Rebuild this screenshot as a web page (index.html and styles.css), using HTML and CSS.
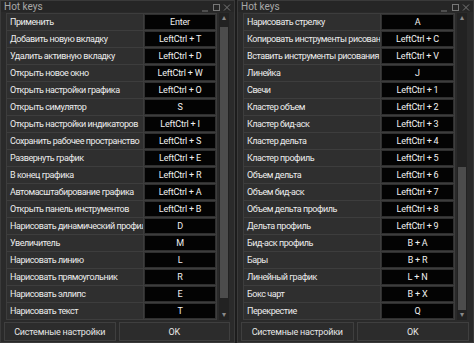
FILE: index.html
```html
<!DOCTYPE html>
<html lang="ru">
<head>
    <meta charset="UTF-8">
    <title>Hot keys</title>
    <link rel="stylesheet" href="styles.css">
</head>
<body>
<div class="desk">
    <div class="window">
        <div class="titlebar">
            <span class="titlebar__text">Hot keys</span>
            <span class="titlebar__btns">
                <svg width="30" height="9" viewBox="0 0 30 9">
                    <path d="M1 8H7" stroke="#777" stroke-width="1"/>
                    <rect x="12.5" y="1.5" width="6" height="6" fill="none" stroke="#777"/>
                    <path d="M23 1.5L29 7.5M29 1.5L23 7.5" stroke="#777" stroke-width="1"/>
                </svg>
            </span>
        </div>
        <div class="body">
            <div class="list">
                <div class="row"><span class="row__name">Применить</span><span class="row__key">Enter</span></div>
                <div class="row"><span class="row__name">Добавить новую вкладку</span><span class="row__key">LeftCtrl + T</span></div>
                <div class="row"><span class="row__name">Удалить активную вкладку</span><span class="row__key">LeftCtrl + D</span></div>
                <div class="row"><span class="row__name">Открыть новое окно</span><span class="row__key">LeftCtrl + W</span></div>
                <div class="row"><span class="row__name">Открыть настройки графика</span><span class="row__key">LeftCtrl + O</span></div>
                <div class="row"><span class="row__name">Открыть симулятор</span><span class="row__key">S</span></div>
                <div class="row"><span class="row__name">Открыть настройки индикаторов</span><span class="row__key">LeftCtrl + I</span></div>
                <div class="row"><span class="row__name">Сохранить рабочее пространство</span><span class="row__key">LeftCtrl + S</span></div>
                <div class="row"><span class="row__name">Развернуть график</span><span class="row__key">LeftCtrl + E</span></div>
                <div class="row"><span class="row__name">В конец графика</span><span class="row__key">LeftCtrl + R</span></div>
                <div class="row"><span class="row__name">Автомасштабирование графика</span><span class="row__key">LeftCtrl + A</span></div>
                <div class="row"><span class="row__name">Открыть панель инструментов</span><span class="row__key">LeftCtrl + B</span></div>
                <div class="row"><span class="row__name">Нарисовать динамический профил</span><span class="row__key">D</span></div>
                <div class="row"><span class="row__name">Увеличитель</span><span class="row__key">M</span></div>
                <div class="row"><span class="row__name">Нарисовать линию</span><span class="row__key">L</span></div>
                <div class="row"><span class="row__name">Нарисовать прямоугольник</span><span class="row__key">R</span></div>
                <div class="row"><span class="row__name">Нарисовать эллипс</span><span class="row__key">E</span></div>
                <div class="row"><span class="row__name">Нарисовать текст</span><span class="row__key">T</span></div>
            </div>
            <div class="scroll">
                <span class="scroll__arrow">&#9652;</span>
                <div class="scroll__track scroll__track--left"><div class="scroll__thumb"></div></div>
                <span class="scroll__arrow">&#9662;</span>
            </div>
        </div>
        <div class="footer">
            <button class="btn">Системные настройки</button>
            <button class="btn">OK</button>
        </div>
    </div>

    <div class="window window--right">
        <div class="titlebar">
            <span class="titlebar__text">Hot keys</span>
            <span class="titlebar__btns">
                <svg width="30" height="9" viewBox="0 0 30 9">
                    <path d="M1 8H7" stroke="#777" stroke-width="1"/>
                    <rect x="12.5" y="1.5" width="6" height="6" fill="none" stroke="#777"/>
                    <path d="M23 1.5L29 7.5M29 1.5L23 7.5" stroke="#777" stroke-width="1"/>
                </svg>
            </span>
        </div>
        <div class="body">
            <div class="list">
                <div class="row"><span class="row__name">Нарисовать стрелку</span><span class="row__key">A</span></div>
                <div class="row"><span class="row__name">Копировать инструменты рисовани</span><span class="row__key">LeftCtrl + C</span></div>
                <div class="row"><span class="row__name">Вставить инструменты рисования</span><span class="row__key">LeftCtrl + V</span></div>
                <div class="row"><span class="row__name">Линейка</span><span class="row__key">J</span></div>
                <div class="row"><span class="row__name">Свечи</span><span class="row__key">LeftCtrl + 1</span></div>
                <div class="row"><span class="row__name">Кластер объем</span><span class="row__key">LeftCtrl + 2</span></div>
                <div class="row"><span class="row__name">Кластер бид-аск</span><span class="row__key">LeftCtrl + 3</span></div>
                <div class="row"><span class="row__name">Кластер дельта</span><span class="row__key">LeftCtrl + 4</span></div>
                <div class="row"><span class="row__name">Кластер профиль</span><span class="row__key">LeftCtrl + 5</span></div>
                <div class="row"><span class="row__name">Объем дельта</span><span class="row__key">LeftCtrl + 6</span></div>
                <div class="row"><span class="row__name">Объем бид-аск</span><span class="row__key">LeftCtrl + 7</span></div>
                <div class="row"><span class="row__name">Объем дельта профиль</span><span class="row__key">LeftCtrl + 8</span></div>
                <div class="row"><span class="row__name">Дельта профиль</span><span class="row__key">LeftCtrl + 9</span></div>
                <div class="row"><span class="row__name">Бид-аск профиль</span><span class="row__key">B + A</span></div>
                <div class="row"><span class="row__name">Бары</span><span class="row__key">B + R</span></div>
                <div class="row"><span class="row__name">Линейный график</span><span class="row__key">L + N</span></div>
                <div class="row"><span class="row__name">Бокс чарт</span><span class="row__key">B + X</span></div>
                <div class="row"><span class="row__name">Перекрестие</span><span class="row__key">Q</span></div>
            </div>
            <div class="scroll">
                <span class="scroll__arrow">&#9652;</span>
                <div class="scroll__track scroll__track--right"><div class="scroll__thumb"></div></div>
                <span class="scroll__arrow">&#9662;</span>
            </div>
        </div>
        <div class="footer">
            <button class="btn">Системные настройки</button>
            <button class="btn">OK</button>
        </div>
    </div>
</div>
</body>
</html>
```

FILE: styles.css
```css
body {
  margin: 0;
  padding: 0;
  background-color: #1c1c1c;
  font-family: Roboto, "Noto Sans", sans-serif;
  font-size: 9px;
  letter-spacing: -0.45px;
  color: #ececec;
}

.desk {
  display: flex;
  gap: 2px;
  width: 474px;
  height: 343px;
  overflow: hidden;
}

.window {
  display: flex;
  flex-direction: column;
  width: 235px;
  height: 343px;
  background-color: #2a2a2a;
  box-sizing: border-box;
  border: 1px solid #3a3a3a;
}

.window--right {
  width: 237px;
}

.titlebar {
  display: flex;
  justify-content: space-between;
  align-items: center;
  height: 11px;
  padding: 0 3px 0 3px;
  background-color: #262626;
  color: #a8a8a8;
  font-size: 10px;
  letter-spacing: 0;
}

.titlebar__btns {
  display: flex;
  margin-top: 1px;
}

.body {
  display: flex;
  gap: 2px;
  padding: 1px 5px 0 5px;
}

.list {
  width: 210px;
  border: 1px solid #3d3d3d;
  border-bottom: none;
}

.row {
  display: flex;
  height: 17px;
  box-sizing: border-box;
  border-bottom: 1px solid #3d3d3d;
  background-color: #2f2f2f;
}

.row__name {
  flex: none;
  box-sizing: border-box;
  width: 137px;
  padding-left: 3px;
  line-height: 16px;
  white-space: nowrap;
  overflow: hidden;
  border-right: 1px solid #3d3d3d;
}

.row__key {
  flex: 1;
  margin: 1px;
  background-color: #030303;
  text-align: center;
  line-height: 14px;
  color: #f0f0f0;
  letter-spacing: -0.2px;
}

.scroll {
  display: flex;
  flex-direction: column;
  align-items: center;
  width: 10px;
  background-color: #222222;
}

.scroll__arrow {
  height: 10px;
  line-height: 10px;
  font-size: 8px;
  color: #8a8a8a;
}

.scroll__track {
  flex: 1;
  width: 8px;
  display: flex;
  flex-direction: column;
}

.scroll__track--left {
  padding: 4px 0 12px;
}

.scroll__track--right {
  padding: 144px 0 0;
}

.scroll__thumb {
  flex: 1;
  background-color: #4c4c4c;
}

.footer {
  display: flex;
  gap: 3px;
  padding: 2px 4px 0 3px;
}

.btn {
  flex: 1;
  height: 19px;
  padding: 0;
  background-color: #2c2c2c;
  border: 1px solid #3f3f3f;
  color: #e6e6e6;
  font-family: Roboto, "Noto Sans", sans-serif;
  font-size: 9px;
  letter-spacing: -0.2px;
}
```
